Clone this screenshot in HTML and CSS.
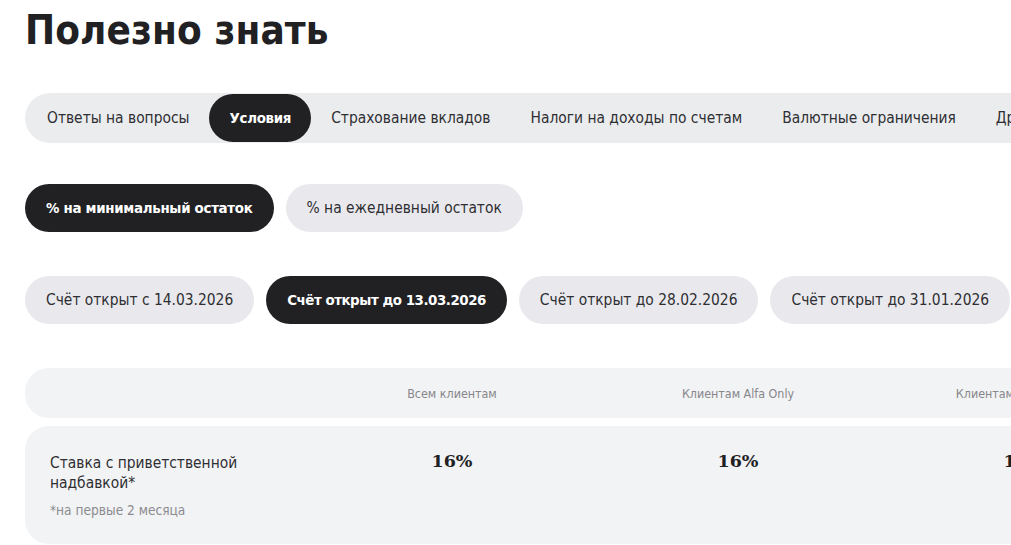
FILE: index.html
```html
<!DOCTYPE html>
<html lang="ru">
<head>
<meta charset="utf-8">
<link rel="stylesheet" href="styles.css">
</head>
<body>
<main class="page">
  <h1 class="title">Полезно знать</h1>
  <nav class="tabs">
    <span class="tab">Ответы на вопросы</span>
    <span class="tab tab-active">Условия</span>
    <span class="tab">Страхование вкладов</span>
    <span class="tab">Налоги на доходы по счетам</span>
    <span class="tab">Валютные ограничения</span>
    <span class="tab">Другое</span>
  </nav>
  <div class="chips chips-first">
    <span class="chip chip-active">% на минимальный остаток</span>
    <span class="chip">% на ежедневный остаток</span>
  </div>
  <div class="chips chips-second">
    <span class="chip">Счёт открыт с 14.03.2026</span>
    <span class="chip chip-active">Счёт открыт до 13.03.2026</span>
    <span class="chip">Счёт открыт до 28.02.2026</span>
    <span class="chip">Счёт открыт до 31.01.2026</span>
  </div>
  <div class="table">
    <div class="row row-head">
      <div class="cell cell-label"></div>
      <div class="cell">Всем клиентам</div>
      <div class="cell">Клиентам Alfa Only</div>
      <div class="cell">Клиентам Alfa Premium</div>
    </div>
    <div class="row row-body">
      <div class="cell cell-label">
        <div class="label">Ставка с приветственной надбавкой*</div>
        <div class="note">*на первые 2 месяца</div>
      </div>
      <div class="cell value">16%</div>
      <div class="cell value">16%</div>
      <div class="cell value">16%</div>
    </div>
  </div>
</main>
</body>
</html>
```

FILE: styles.css
```css
html, body {
  margin: 0;
  padding: 0;
  background: #ffffff;
  overflow: hidden;
}
body {
  font-family: "DejaVu Sans Condensed", "DejaVu Sans", sans-serif;
  color: #212124;
  width: 1011px;
  height: 545px;
}
.page {
  padding: 0 0 0 25px;
  width: 1400px;
}
.title {
  margin: 0;
  padding-top: 4px;
  font-size: 40px;
  line-height: 52px;
  font-weight: 700;
  letter-spacing: 0.1px;
  color: #212124;
}
.tabs {
  margin-top: 37px;
  display: flex;
  background: #ebecee;
  border-radius: 25px 0 0 25px;
  padding: 1px 1px 1px 2px;
  height: 48px;
  width: 1200px;
}
.tab {
  display: flex;
  align-items: center;
  padding: 0 20px;
  height: 48px;
  font-size: 15.4px;
  color: #2f2f33;
  white-space: nowrap;
  border-radius: 24px;
}
.tab-active {
  background: #212124;
  color: #ffffff;
  font-weight: 700;
  font-size: 14.9px;
  letter-spacing: -0.3px;
}
.chips {
  display: flex;
  gap: 12px;
}
.chips-first { margin-top: 41px; }
.chips-second { margin-top: 44px; }
.chip {
  display: flex;
  align-items: center;
  height: 48px;
  padding: 0 21px;
  border-radius: 24px;
  background: #e9e9ed;
  font-size: 15.4px;
  color: #2f2f33;
  white-space: nowrap;
}
.chip-active {
  background: #212124;
  color: #ffffff;
  font-weight: 700;
  font-size: 14.9px;
  letter-spacing: -0.3px;
}
.chips-second .chip-active {
  letter-spacing: -0.46px;
}
.table {
  margin-top: 44px;
  display: flex;
  flex-direction: column;
  gap: 8px;
  width: 1200px;
}
.row {
  display: grid;
  grid-template-columns: 284px 286px 286px 286px;
  background: #f2f3f5;
  border-radius: 24px 0 0 24px;
}
.row-head {
  height: 50px;
  align-items: center;
}
.row-head .cell {
  text-align: center;
  font-size: 12.4px;
  color: #86868a;
}
.row-body {
  height: 118px;
  align-items: start;
}
.cell-label {
  padding: 27px 0 0 25px;
}
.label {
  font-size: 15.4px;
  line-height: 20px;
  color: #2f2f33;
  width: 210px;
}
.note {
  margin-top: 9px;
  font-size: 13.6px;
  line-height: 16px;
  color: #8b8b8f;
}
.value {
  padding-top: 25px;
  text-align: center;
  font-family: "DejaVu Serif", "Liberation Serif", serif;
  font-weight: 700;
  font-size: 17.5px;
  color: #212124;
}
```
